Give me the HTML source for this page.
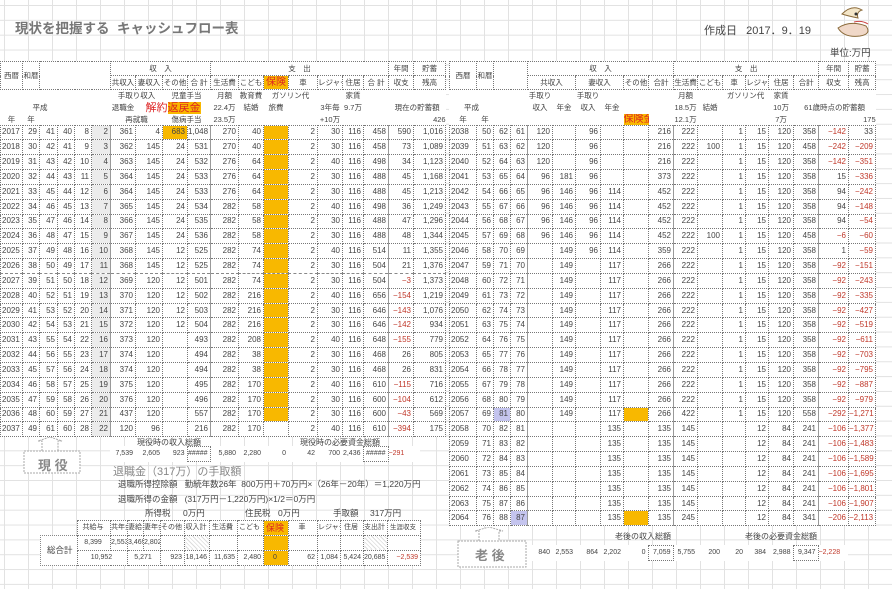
<!DOCTYPE html>
<html><head><meta charset="utf-8">
<style>
body{margin:0;width:892px;height:589px;position:relative;overflow:hidden;background:#fff;
font-family:"Liberation Sans","Noto Sans CJK JP",sans-serif;color:#333;
background-image:linear-gradient(#e2e2e2 1px,transparent 1px),linear-gradient(90deg,#e2e2e2 1px,transparent 1px);
background-size:100% 14.85px,24px 100%;background-position:0 5px,4px 0}
.t{position:absolute;border-collapse:collapse;table-layout:fixed;font-size:8px;background:#fff;color:#444}
.t td{padding:0 2px 0 0;text-align:right;border:1px dotted #777;white-space:nowrap;overflow:hidden;line-height:12px}
.t tr{height:14.85px}
.t td.y{text-align:left;padding-left:1px}
.t td.s{border-right:1px solid #999}
.o{background:#f8b800}
.g{background:#ececec}
.r{color:#c0392b}
.l{background:#c4c4ee}
.h{background:#fff}
.h td{text-align:center;padding:0;font-size:7.5px}
.h td.n{border:none}
.a{position:absolute;white-space:nowrap;font-size:8px;color:#444}
.hat{background:repeating-linear-gradient(45deg,#fff 0 2px,#ddd 2px 3px)}
</style></head><body>

<div class="a" style="left:15px;top:17px;font-size:13.5px;font-weight:bold;color:#777">現状を把握する&nbsp; キャッシュフロー表</div>
<div class="a" style="left:704px;top:22px;font-size:11px;color:#444">作成日&nbsp;&nbsp; 2017．9．19</div>
<svg class="a" style="left:832px;top:4px" width="48" height="38" viewBox="0 0 48 38">
<path d="M10 10 Q20 0 30 6 Q24 8 26 14 Q16 12 10 10Z" fill="#f4e6c8" stroke="#8a6a3a"/>
<path d="M6 24 Q18 16 34 22 Q40 30 28 32 Q12 34 6 24Z" fill="#f0d8c8" stroke="#8a6a3a"/>
<path d="M22 18 Q30 16 36 20" stroke="#c44" fill="none"/><circle cx="24" cy="10" r="1.5" fill="#333"/></svg>
<div class="a" style="left:830px;top:45px;font-size:9.5px">単位:万円</div>

<!-- LEFT HEADER -->
<table class="t h" style="left:0;top:61px;width:445px">
<colgroup><col style="width:22px"><col style="width:17px"><col style="width:18px"><col style="width:17px"><col style="width:17px"><col style="width:19px"><col style="width:25px"><col style="width:27px"><col style="width:25px"><col style="width:23px"><col style="width:28px"><col style="width:25px"><col style="width:25px"><col style="width:29px"><col style="width:25px"><col style="width:21px"><col style="width:25px"><col style="width:25px"><col style="width:32px"></colgroup>
<tr style="height:14px"><td rowspan="2">西暦</td><td rowspan="2">和暦</td><td rowspan="2" colspan="4"></td><td colspan="4">収　入</td><td colspan="7">支　出</td><td>年間</td><td>貯蓄</td></tr>
<tr style="height:14px"><td>共収入</td><td>妻収入</td><td>その他</td><td>合 計</td><td>生活費</td><td>こども</td><td class="o" style="color:#d22;font-size:10px">保険</td><td>車</td><td>レジャー</td><td>住居</td><td>合 計</td><td>収支</td><td>残高</td></tr>
<tr style="height:12px"><td class="n" colspan="6"></td><td class="n" colspan="2">手取り収入</td><td class="n" colspan="2">児童手当</td><td class="n">月額</td><td class="n">教育費</td><td class="n" colspan="2">ガソリン代</td><td class="n"></td><td class="n">家賃</td><td class="n" colspan="3"></td></tr>
<tr style="height:12px"><td class="n"></td><td class="n" colspan="2">平成</td><td class="n" colspan="3"></td><td class="n">退職金</td><td class="n" colspan="3" style="color:#d22;font-size:11px"><span>解約</span><span style="background:#f8b800">返戻金</span></td><td class="n">22.4万</td><td class="n">結婚</td><td class="n">旅費</td><td class="n"></td><td class="n">3年毎</td><td class="n">9.7万</td><td class="n"></td><td class="n" colspan="2">現在の貯蓄額</td></tr>
<tr style="height:12px"><td class="n">年</td><td class="n">年</td><td class="n" colspan="4"></td><td class="n" colspan="2">再就職</td><td class="n" colspan="2">傷病手当</td><td class="n">23.5万</td><td class="n" colspan="3"></td><td class="n">+10万</td><td class="n" colspan="3"></td><td class="n" style="text-align:right">426</td></tr>
</table>

<!-- LEFT DATA -->
<table class="t" style="left:0;top:124.5px;width:445px">
<colgroup><col style="width:22px"><col style="width:17px"><col style="width:18px"><col style="width:17px"><col style="width:17px"><col style="width:19px"><col style="width:25px"><col style="width:27px"><col style="width:25px"><col style="width:23px"><col style="width:28px"><col style="width:25px"><col style="width:25px"><col style="width:29px"><col style="width:25px"><col style="width:21px"><col style="width:25px"><col style="width:25px"><col style="width:32px"></colgroup>
<tr><td class="y">2017</td><td>29</td><td>41</td><td>40</td><td>8</td><td class="g s">2</td><td>361</td><td>4</td><td class="o">683</td><td class="s">1,048</td><td>270</td><td>40</td><td class="o"></td><td>2</td><td>30</td><td>116</td><td class="s">458</td><td>590</td><td>1,016</td></tr>
<tr><td class="y">2018</td><td>30</td><td>42</td><td>41</td><td>9</td><td class="g s">3</td><td>362</td><td>145</td><td>24</td><td class="s">531</td><td>270</td><td>40</td><td class="o"></td><td>2</td><td>30</td><td>116</td><td class="s">458</td><td>73</td><td>1,089</td></tr>
<tr><td class="y">2019</td><td>31</td><td>43</td><td>42</td><td>10</td><td class="g s">4</td><td>363</td><td>145</td><td>24</td><td class="s">532</td><td>276</td><td>64</td><td class="o"></td><td>2</td><td>40</td><td>116</td><td class="s">498</td><td>34</td><td>1,123</td></tr>
<tr><td class="y">2020</td><td>32</td><td>44</td><td>43</td><td>11</td><td class="g s">5</td><td>364</td><td>145</td><td>24</td><td class="s">533</td><td>276</td><td>64</td><td class="o"></td><td>2</td><td>30</td><td>116</td><td class="s">488</td><td>45</td><td>1,168</td></tr>
<tr><td class="y">2021</td><td>33</td><td>45</td><td>44</td><td>12</td><td class="g s">6</td><td>364</td><td>145</td><td>24</td><td class="s">533</td><td>276</td><td>64</td><td class="o"></td><td>2</td><td>30</td><td>116</td><td class="s">488</td><td>45</td><td>1,213</td></tr>
<tr><td class="y">2022</td><td>34</td><td>46</td><td>45</td><td>13</td><td class="g s">7</td><td>365</td><td>145</td><td>24</td><td class="s">534</td><td>282</td><td>58</td><td class="o"></td><td>2</td><td>40</td><td>116</td><td class="s">498</td><td>36</td><td>1,249</td></tr>
<tr><td class="y">2023</td><td>35</td><td>47</td><td>46</td><td>14</td><td class="g s">8</td><td>366</td><td>145</td><td>24</td><td class="s">535</td><td>282</td><td>58</td><td class="o"></td><td>2</td><td>30</td><td>116</td><td class="s">488</td><td>47</td><td>1,296</td></tr>
<tr><td class="y">2024</td><td>36</td><td>48</td><td>47</td><td>15</td><td class="g s">9</td><td>367</td><td>145</td><td>24</td><td class="s">536</td><td>282</td><td>58</td><td class="o"></td><td>2</td><td>30</td><td>116</td><td class="s">488</td><td>48</td><td>1,344</td></tr>
<tr><td class="y">2025</td><td>37</td><td>49</td><td>48</td><td>16</td><td class="g s">10</td><td>368</td><td>145</td><td>12</td><td class="s">525</td><td>282</td><td>74</td><td class="o"></td><td>2</td><td>40</td><td>116</td><td class="s">514</td><td>11</td><td>1,355</td></tr>
<tr><td class="y">2026</td><td>38</td><td>50</td><td>49</td><td>17</td><td class="g s">11</td><td>368</td><td>145</td><td>12</td><td class="s">525</td><td>282</td><td>74</td><td class="o"></td><td>2</td><td>30</td><td>116</td><td class="s">504</td><td>21</td><td>1,376</td></tr>
<tr style="border-top:1px dashed #888"><td class="y">2027</td><td>39</td><td>51</td><td>50</td><td>18</td><td class="g s">12</td><td>369</td><td>120</td><td>12</td><td class="s">501</td><td>282</td><td>74</td><td class="o"></td><td>2</td><td>30</td><td>116</td><td class="s">504</td><td class="r">−3</td><td>1,373</td></tr>
<tr><td class="y">2028</td><td>40</td><td>52</td><td>51</td><td>19</td><td class="g s">13</td><td>370</td><td>120</td><td>12</td><td class="s">502</td><td>282</td><td>216</td><td class="o"></td><td>2</td><td>40</td><td>116</td><td class="s">656</td><td class="r">−154</td><td>1,219</td></tr>
<tr><td class="y">2029</td><td>41</td><td>53</td><td>52</td><td>20</td><td class="g s">14</td><td>371</td><td>120</td><td>12</td><td class="s">503</td><td>282</td><td>216</td><td class="o"></td><td>2</td><td>30</td><td>116</td><td class="s">646</td><td class="r">−143</td><td>1,076</td></tr>
<tr><td class="y">2030</td><td>42</td><td>54</td><td>53</td><td>21</td><td class="g s">15</td><td>372</td><td>120</td><td>12</td><td class="s">504</td><td>282</td><td>216</td><td class="o"></td><td>2</td><td>30</td><td>116</td><td class="s">646</td><td class="r">−142</td><td>934</td></tr>
<tr><td class="y">2031</td><td>43</td><td>55</td><td>54</td><td>22</td><td class="g s">16</td><td>373</td><td>120</td><td></td><td class="s">493</td><td>282</td><td>208</td><td class="o"></td><td>2</td><td>40</td><td>116</td><td class="s">648</td><td class="r">−155</td><td>779</td></tr>
<tr><td class="y">2032</td><td>44</td><td>56</td><td>55</td><td>23</td><td class="g s">17</td><td>374</td><td>120</td><td></td><td class="s">494</td><td>282</td><td>38</td><td class="o"></td><td>2</td><td>30</td><td>116</td><td class="s">468</td><td>26</td><td>805</td></tr>
<tr><td class="y">2033</td><td>45</td><td>57</td><td>56</td><td>24</td><td class="g s">18</td><td>374</td><td>120</td><td></td><td class="s">494</td><td>282</td><td>38</td><td class="o"></td><td>2</td><td>30</td><td>116</td><td class="s">468</td><td>26</td><td>831</td></tr>
<tr><td class="y">2034</td><td>46</td><td>58</td><td>57</td><td>25</td><td class="g s">19</td><td>375</td><td>120</td><td></td><td class="s">495</td><td>282</td><td>170</td><td class="o"></td><td>2</td><td>40</td><td>116</td><td class="s">610</td><td class="r">−115</td><td>716</td></tr>
<tr><td class="y">2035</td><td>47</td><td>59</td><td>58</td><td>26</td><td class="g s">20</td><td>376</td><td>120</td><td></td><td class="s">496</td><td>282</td><td>170</td><td class="o"></td><td>2</td><td>30</td><td>116</td><td class="s">600</td><td class="r">−104</td><td>612</td></tr>
<tr><td class="y">2036</td><td>48</td><td>60</td><td>59</td><td>27</td><td class="g s">21</td><td>437</td><td>120</td><td></td><td class="s">557</td><td>282</td><td>170</td><td class="o"></td><td>2</td><td>30</td><td>116</td><td class="s">600</td><td class="r">−43</td><td>569</td></tr>
<tr><td class="y">2037</td><td>49</td><td>61</td><td>60</td><td>28</td><td class="g s">22</td><td>120</td><td>96</td><td></td><td class="s">216</td><td>282</td><td>170</td><td></td><td>2</td><td>40</td><td>116</td><td class="s">610</td><td class="r">−394</td><td>175</td></tr>
</table>

<!-- LEFT BOTTOM -->
<svg class="a" style="left:20px;top:437px" width="64" height="38"><path d="M22 14 V4 H18 L30 0 L42 4 H38 V14" fill="#fff" stroke="#aaa" stroke-dasharray="2 1"/><rect x="4" y="14" width="56" height="22" fill="#fff" stroke="#aaa" stroke-dasharray="2 1"/></svg>
<div class="a" style="left:38px;top:455px;font-size:13px;font-weight:bold;color:#888">現 役</div>
<div class="a" style="left:137px;top:437px">現役時の収入総額</div>
<div class="a" style="left:300px;top:437px">現役時の必要資金総額</div>
<table class="t" style="left:110px;top:446px;width:310px;font-size:7px">
<colgroup><col style="width:25px"><col style="width:27px"><col style="width:25px"><col style="width:23px"><col style="width:28px"><col style="width:25px"><col style="width:25px"><col style="width:29px"><col style="width:25px"><col style="width:21px"><col style="width:25px"><col style="width:32px"></colgroup>
<tr><td style="border:none">7,539</td><td style="border:none">2,605</td><td style="border:none">923</td><td>#####</td><td style="border:none">5,880</td><td style="border:none">2,280</td><td style="border:none">0</td><td style="border:none">42</td><td style="border:none">700</td><td style="border:none">2,436</td><td>#####</td><td class="r" style="border:none;text-align:left">−291</td></tr>
</table>
<div class="a" style="left:113px;top:463px;font-size:11px;color:#888">退職金（317万）の手取額</div>
<div class="a" style="left:118px;top:478px;font-size:8.5px">退職所得控除額&nbsp;&nbsp; 勤続年数26年&nbsp; 800万円＋70万円×（26年－20年）＝1,220万円</div>
<div class="a" style="left:118px;top:493px;font-size:8.5px">退職所得の金額&nbsp;&nbsp; (317万円－1,220万円)×1/2＝0万円</div>
<div class="a" style="left:145px;top:507px;font-size:8.5px">所得税</div>
<div class="a" style="left:183px;top:507px;font-size:8.5px">0万円</div>
<div class="a" style="left:245px;top:507px;font-size:8.5px">住民税</div>
<div class="a" style="left:278px;top:507px;font-size:8.5px">0万円</div>
<div class="a" style="left:333px;top:507px;font-size:8.5px">手取額</div>
<div class="a" style="left:370px;top:507px;font-size:8.5px">317万円</div>
<div class="a" style="left:40px;top:535px;width:37px;height:29px;border:1px dotted #888;background:#fff"></div>
<div class="a" style="left:47px;top:544px;font-size:8.5px">総合計</div>
<table class="t" style="left:77px;top:520px;width:343px;font-size:7px">
<colgroup><col style="width:33px"><col style="width:17px"><col style="width:16px"><col style="width:17px"><col style="width:24px"><col style="width:25px"><col style="width:28px"><col style="width:26px"><col style="width:25px"><col style="width:29px"><col style="width:23px"><col style="width:23px"><col style="width:24px"><col style="width:33px"></colgroup>
<tr style="text-align:center"><td style="text-align:center">共給与</td><td style="text-align:center">共年金</td><td style="text-align:center">妻給与</td><td style="text-align:center">妻年金</td><td style="text-align:center">その他</td><td style="text-align:center">収入計</td><td style="text-align:center">生活費</td><td style="text-align:center">こども</td><td class="o" style="text-align:center;color:#d22;font-size:9px">保険</td><td style="text-align:center">車</td><td style="text-align:center">レジャー</td><td style="text-align:center">住居</td><td style="text-align:center">支出計</td><td style="text-align:center;font-size:6.5px">生涯収支</td></tr>
<tr><td style="text-align:center">8,399</td><td>2,553</td><td>3,469</td><td>2,802</td><td></td><td class="hat"></td><td></td><td></td><td class="o"></td><td></td><td></td><td></td><td class="hat"></td><td></td></tr>
<tr><td colspan="2" style="text-align:center">10,952</td><td colspan="2" style="text-align:center">5,271</td><td>923</td><td>18,146</td><td>11,635</td><td>2,480</td><td class="o" style="text-align:center">0</td><td>62</td><td>1,084</td><td>5,424</td><td>20,685</td><td class="r">−2,539</td></tr>
</table>

<!-- RIGHT HEADER -->
<table class="t h" style="left:449px;top:61px;width:426px">
<colgroup><col style="width:27px"><col style="width:17px"><col style="width:17px"><col style="width:17px"><col style="width:25px"><col style="width:23px"><col style="width:25px"><col style="width:23px"><col style="width:25px"><col style="width:25px"><col style="width:24px"><col style="width:25px"><col style="width:23px"><col style="width:23px"><col style="width:25px"><col style="width:25px"><col style="width:30px"><col style="width:27px"></colgroup>
<tr style="height:14px"><td rowspan="2">西暦</td><td rowspan="2">和暦</td><td rowspan="2" colspan="2"></td><td colspan="6">収　入</td><td colspan="6">支　出</td><td>年間</td><td>貯蓄</td></tr>
<tr style="height:14px"><td colspan="2">共収入</td><td colspan="2">妻収入</td><td>その他</td><td>合計</td><td>生活費</td><td>こども</td><td>車</td><td>レジャー</td><td>住居</td><td>合計</td><td>収支</td><td>残高</td></tr>
<tr style="height:12px"><td class="n" colspan="4"></td><td class="n">手取り</td><td class="n"></td><td class="n">手取り</td><td class="n" colspan="3"></td><td class="n">月額</td><td class="n"></td><td class="n" colspan="2">ガソリン代</td><td class="n">家賃</td><td class="n" colspan="3"></td></tr>
<tr style="height:12px"><td class="n" colspan="2">平成</td><td class="n" colspan="2"></td><td class="n">収入</td><td class="n">年金</td><td class="n">収入</td><td class="n">年金</td><td class="n" colspan="2"></td><td class="n">18.5万</td><td class="n">結婚</td><td class="n" colspan="2"></td><td class="n">10万</td><td class="n" colspan="3">61歳時点の貯蓄額</td></tr>
<tr style="height:12px"><td class="n">年</td><td class="n">年</td><td class="n" colspan="6"></td><td class="n" style="color:#d22;font-size:10px;background:#f8b800">保険金</td><td class="n"></td><td class="n">12.1万</td><td class="n" colspan="3"></td><td class="n">7万</td><td class="n" colspan="2"></td><td class="n" style="text-align:right">175</td></tr>
</table>

<!-- RIGHT DATA -->
<table class="t" style="left:449px;top:124.5px;width:426px">
<colgroup><col style="width:27px"><col style="width:17px"><col style="width:17px"><col style="width:17px"><col style="width:25px"><col style="width:23px"><col style="width:25px"><col style="width:23px"><col style="width:25px"><col style="width:25px"><col style="width:24px"><col style="width:25px"><col style="width:23px"><col style="width:23px"><col style="width:25px"><col style="width:25px"><col style="width:30px"><col style="width:27px"></colgroup>
<tr><td class="y">2038</td><td>50</td><td>62</td><td class="s">61</td><td>120</td><td></td><td>96</td><td></td><td></td><td class="s">216</td><td>222</td><td></td><td>1</td><td>15</td><td>120</td><td class="s">358</td><td class="r">−142</td><td>33</td></tr>
<tr><td class="y">2039</td><td>51</td><td>63</td><td class="s">62</td><td>120</td><td></td><td>96</td><td></td><td></td><td class="s">216</td><td>222</td><td>100</td><td>1</td><td>15</td><td>120</td><td class="s">458</td><td class="r">−242</td><td class="r">−209</td></tr>
<tr><td class="y">2040</td><td>52</td><td>64</td><td class="s">63</td><td>120</td><td></td><td>96</td><td></td><td></td><td class="s">216</td><td>222</td><td></td><td>1</td><td>15</td><td>120</td><td class="s">358</td><td class="r">−142</td><td class="r">−351</td></tr>
<tr><td class="y">2041</td><td>53</td><td>65</td><td class="s">64</td><td>96</td><td>181</td><td>96</td><td></td><td></td><td class="s">373</td><td>222</td><td></td><td>1</td><td>15</td><td>120</td><td class="s">358</td><td>15</td><td class="r">−336</td></tr>
<tr><td class="y">2042</td><td>54</td><td>66</td><td class="s">65</td><td>96</td><td>146</td><td>96</td><td>114</td><td></td><td class="s">452</td><td>222</td><td></td><td>1</td><td>15</td><td>120</td><td class="s">358</td><td>94</td><td class="r">−242</td></tr>
<tr><td class="y">2043</td><td>55</td><td>67</td><td class="s">66</td><td>96</td><td>146</td><td>96</td><td>114</td><td></td><td class="s">452</td><td>222</td><td></td><td>1</td><td>15</td><td>120</td><td class="s">358</td><td>94</td><td class="r">−148</td></tr>
<tr><td class="y">2044</td><td>56</td><td>68</td><td class="s">67</td><td>96</td><td>146</td><td>96</td><td>114</td><td></td><td class="s">452</td><td>222</td><td></td><td>1</td><td>15</td><td>120</td><td class="s">358</td><td>94</td><td class="r">−54</td></tr>
<tr><td class="y">2045</td><td>57</td><td>69</td><td class="s">68</td><td>96</td><td>146</td><td>96</td><td>114</td><td></td><td class="s">452</td><td>222</td><td>100</td><td>1</td><td>15</td><td>120</td><td class="s">458</td><td class="r">−6</td><td class="r">−60</td></tr>
<tr><td class="y">2046</td><td>58</td><td>70</td><td class="s">69</td><td></td><td>149</td><td>96</td><td>114</td><td></td><td class="s">359</td><td>222</td><td></td><td>1</td><td>15</td><td>120</td><td class="s">358</td><td>1</td><td class="r">−59</td></tr>
<tr><td class="y">2047</td><td>59</td><td>71</td><td class="s">70</td><td></td><td>149</td><td></td><td>117</td><td></td><td class="s">266</td><td>222</td><td></td><td>1</td><td>15</td><td>120</td><td class="s">358</td><td class="r">−92</td><td class="r">−151</td></tr>
<tr><td class="y">2048</td><td>60</td><td>72</td><td class="s">71</td><td></td><td>149</td><td></td><td>117</td><td></td><td class="s">266</td><td>222</td><td></td><td>1</td><td>15</td><td>120</td><td class="s">358</td><td class="r">−92</td><td class="r">−243</td></tr>
<tr><td class="y">2049</td><td>61</td><td>73</td><td class="s">72</td><td></td><td>149</td><td></td><td>117</td><td></td><td class="s">266</td><td>222</td><td></td><td>1</td><td>15</td><td>120</td><td class="s">358</td><td class="r">−92</td><td class="r">−335</td></tr>
<tr><td class="y">2050</td><td>62</td><td>74</td><td class="s">73</td><td></td><td>149</td><td></td><td>117</td><td></td><td class="s">266</td><td>222</td><td></td><td>1</td><td>15</td><td>120</td><td class="s">358</td><td class="r">−92</td><td class="r">−427</td></tr>
<tr><td class="y">2051</td><td>63</td><td>75</td><td class="s">74</td><td></td><td>149</td><td></td><td>117</td><td></td><td class="s">266</td><td>222</td><td></td><td>1</td><td>15</td><td>120</td><td class="s">358</td><td class="r">−92</td><td class="r">−519</td></tr>
<tr><td class="y">2052</td><td>64</td><td>76</td><td class="s">75</td><td></td><td>149</td><td></td><td>117</td><td></td><td class="s">266</td><td>222</td><td></td><td>1</td><td>15</td><td>120</td><td class="s">358</td><td class="r">−92</td><td class="r">−611</td></tr>
<tr><td class="y">2053</td><td>65</td><td>77</td><td class="s">76</td><td></td><td>149</td><td></td><td>117</td><td></td><td class="s">266</td><td>222</td><td></td><td>1</td><td>15</td><td>120</td><td class="s">358</td><td class="r">−92</td><td class="r">−703</td></tr>
<tr><td class="y">2054</td><td>66</td><td>78</td><td class="s">77</td><td></td><td>149</td><td></td><td>117</td><td></td><td class="s">266</td><td>222</td><td></td><td>1</td><td>15</td><td>120</td><td class="s">358</td><td class="r">−92</td><td class="r">−795</td></tr>
<tr><td class="y">2055</td><td>67</td><td>79</td><td class="s">78</td><td></td><td>149</td><td></td><td>117</td><td></td><td class="s">266</td><td>222</td><td></td><td>1</td><td>15</td><td>120</td><td class="s">358</td><td class="r">−92</td><td class="r">−887</td></tr>
<tr><td class="y">2056</td><td>68</td><td>80</td><td class="s">79</td><td></td><td>149</td><td></td><td>117</td><td></td><td class="s">266</td><td>222</td><td></td><td>1</td><td>15</td><td>120</td><td class="s">358</td><td class="r">−92</td><td class="r">−979</td></tr>
<tr><td class="y">2057</td><td>69</td><td class="l">81</td><td class="s">80</td><td></td><td>149</td><td></td><td>117</td><td class="o"></td><td class="s">266</td><td>422</td><td></td><td>1</td><td>15</td><td>120</td><td class="s">558</td><td class="r">−292</td><td class="r">−1,271</td></tr>
<tr><td class="y">2058</td><td>70</td><td>82</td><td class="s">81</td><td></td><td></td><td></td><td>135</td><td></td><td class="s">135</td><td>145</td><td></td><td></td><td>12</td><td>84</td><td class="s">241</td><td class="r">−106</td><td class="r">−1,377</td></tr>
<tr><td class="y">2059</td><td>71</td><td>83</td><td class="s">82</td><td></td><td></td><td></td><td>135</td><td></td><td class="s">135</td><td>145</td><td></td><td></td><td>12</td><td>84</td><td class="s">241</td><td class="r">−106</td><td class="r">−1,483</td></tr>
<tr><td class="y">2060</td><td>72</td><td>84</td><td class="s">83</td><td></td><td></td><td></td><td>135</td><td></td><td class="s">135</td><td>145</td><td></td><td></td><td>12</td><td>84</td><td class="s">241</td><td class="r">−106</td><td class="r">−1,589</td></tr>
<tr><td class="y">2061</td><td>73</td><td>85</td><td class="s">84</td><td></td><td></td><td></td><td>135</td><td></td><td class="s">135</td><td>145</td><td></td><td></td><td>12</td><td>84</td><td class="s">241</td><td class="r">−106</td><td class="r">−1,695</td></tr>
<tr><td class="y">2062</td><td>74</td><td>86</td><td class="s">85</td><td></td><td></td><td></td><td>135</td><td></td><td class="s">135</td><td>145</td><td></td><td></td><td>12</td><td>84</td><td class="s">241</td><td class="r">−106</td><td class="r">−1,801</td></tr>
<tr><td class="y">2063</td><td>75</td><td>87</td><td class="s">86</td><td></td><td></td><td></td><td>135</td><td></td><td class="s">135</td><td>145</td><td></td><td></td><td>12</td><td>84</td><td class="s">241</td><td class="r">−106</td><td class="r">−1,907</td></tr>
<tr><td class="y">2064</td><td>76</td><td>88</td><td class="s l">87</td><td></td><td></td><td></td><td>135</td><td class="o"></td><td class="s">135</td><td>245</td><td></td><td></td><td>12</td><td>84</td><td class="s">341</td><td class="r">−206</td><td class="r">−2,113</td></tr>
</table>

<!-- RIGHT BOTTOM -->
<svg class="a" style="left:455px;top:527px" width="76" height="42"><path d="M24 14 V4 H20 L34 0 L48 4 H44 V14" fill="#fff" stroke="#aaa" stroke-dasharray="2 1"/><rect x="3" y="14" width="68" height="26" fill="#fff" stroke="#aaa" stroke-dasharray="2 1"/></svg>
<div class="a" style="left:475px;top:545px;font-size:13px;font-weight:bold;color:#888">老 後</div>
<div class="a" style="left:615px;top:531px">老後の収入総額</div>
<div class="a" style="left:745px;top:531px">老後の必要資金総額</div>
<table class="t" style="left:527px;top:545px;width:321px;font-size:7px">
<colgroup><col style="width:25px"><col style="width:23px"><col style="width:25px"><col style="width:23px"><col style="width:25px"><col style="width:25px"><col style="width:24px"><col style="width:25px"><col style="width:23px"><col style="width:23px"><col style="width:25px"><col style="width:25px"><col style="width:30px"></colgroup>
<tr><td style="border:none">840</td><td style="border:none">2,553</td><td style="border:none">864</td><td style="border:none">2,202</td><td style="border:none">0</td><td>7,059</td><td style="border:none">5,755</td><td style="border:none">200</td><td style="border:none">20</td><td style="border:none">384</td><td style="border:none">2,988</td><td>9,347</td><td class="r" style="border:none;text-align:left">−2,228</td></tr>
</table>
</body></html>
